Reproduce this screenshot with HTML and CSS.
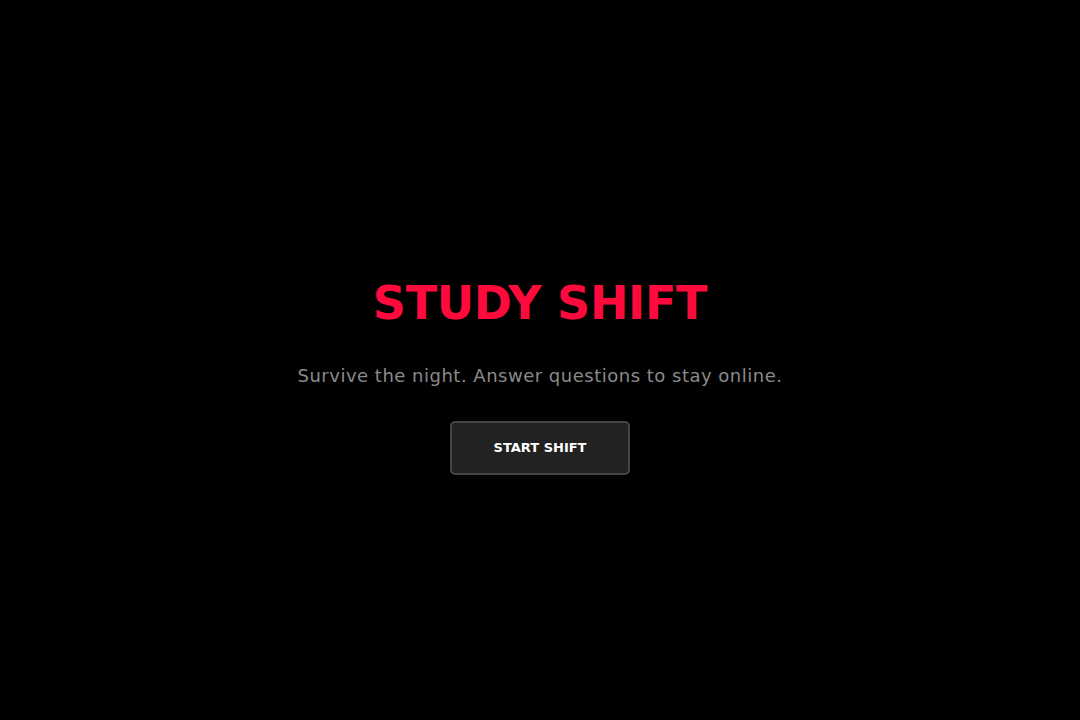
FILE: index.html
```html
<!DOCTYPE html>
<html lang="en">
<head>
  <meta charset="UTF-8" />
  <title>Study Shift</title>
  <link rel="stylesheet" href="styles.css">
</head>
<body>
  <div class="screen">
    <h1 class="title">STUDY SHIFT</h1>
    <p class="tagline">Survive the night. Answer questions to stay online.</p>
    <button class="start-btn">START SHIFT</button>
  </div>
</body>
</html>
```

FILE: styles.css
```css
body {
  margin: 0;
  padding: 0;
  background-color: #000;
  font-family: "DejaVu Sans", sans-serif;
}

.screen {
  height: 720px;
  display: flex;
  flex-direction: column;
  align-items: center;
  justify-content: center;
  padding-top: 34px;
  box-sizing: border-box;
}

.title {
  margin: 0;
  color: #ff0a3c;
  font-size: 46px;
  font-weight: bold;
  letter-spacing: -0.3px;
  line-height: 1;
}

.tagline {
  margin: 39px 0 0;
  color: #8a8a8a;
  font-size: 18px;
  letter-spacing: 0.5px;
}

.start-btn {
  margin-top: 35px;
  width: 180px;
  height: 54px;
  background-color: #222;
  border: 2px solid #444;
  border-radius: 5px;
  color: #fff;
  font-family: "DejaVu Sans", sans-serif;
  font-size: 13px;
  font-weight: bold;
  letter-spacing: 0;
  cursor: pointer;
}
```
